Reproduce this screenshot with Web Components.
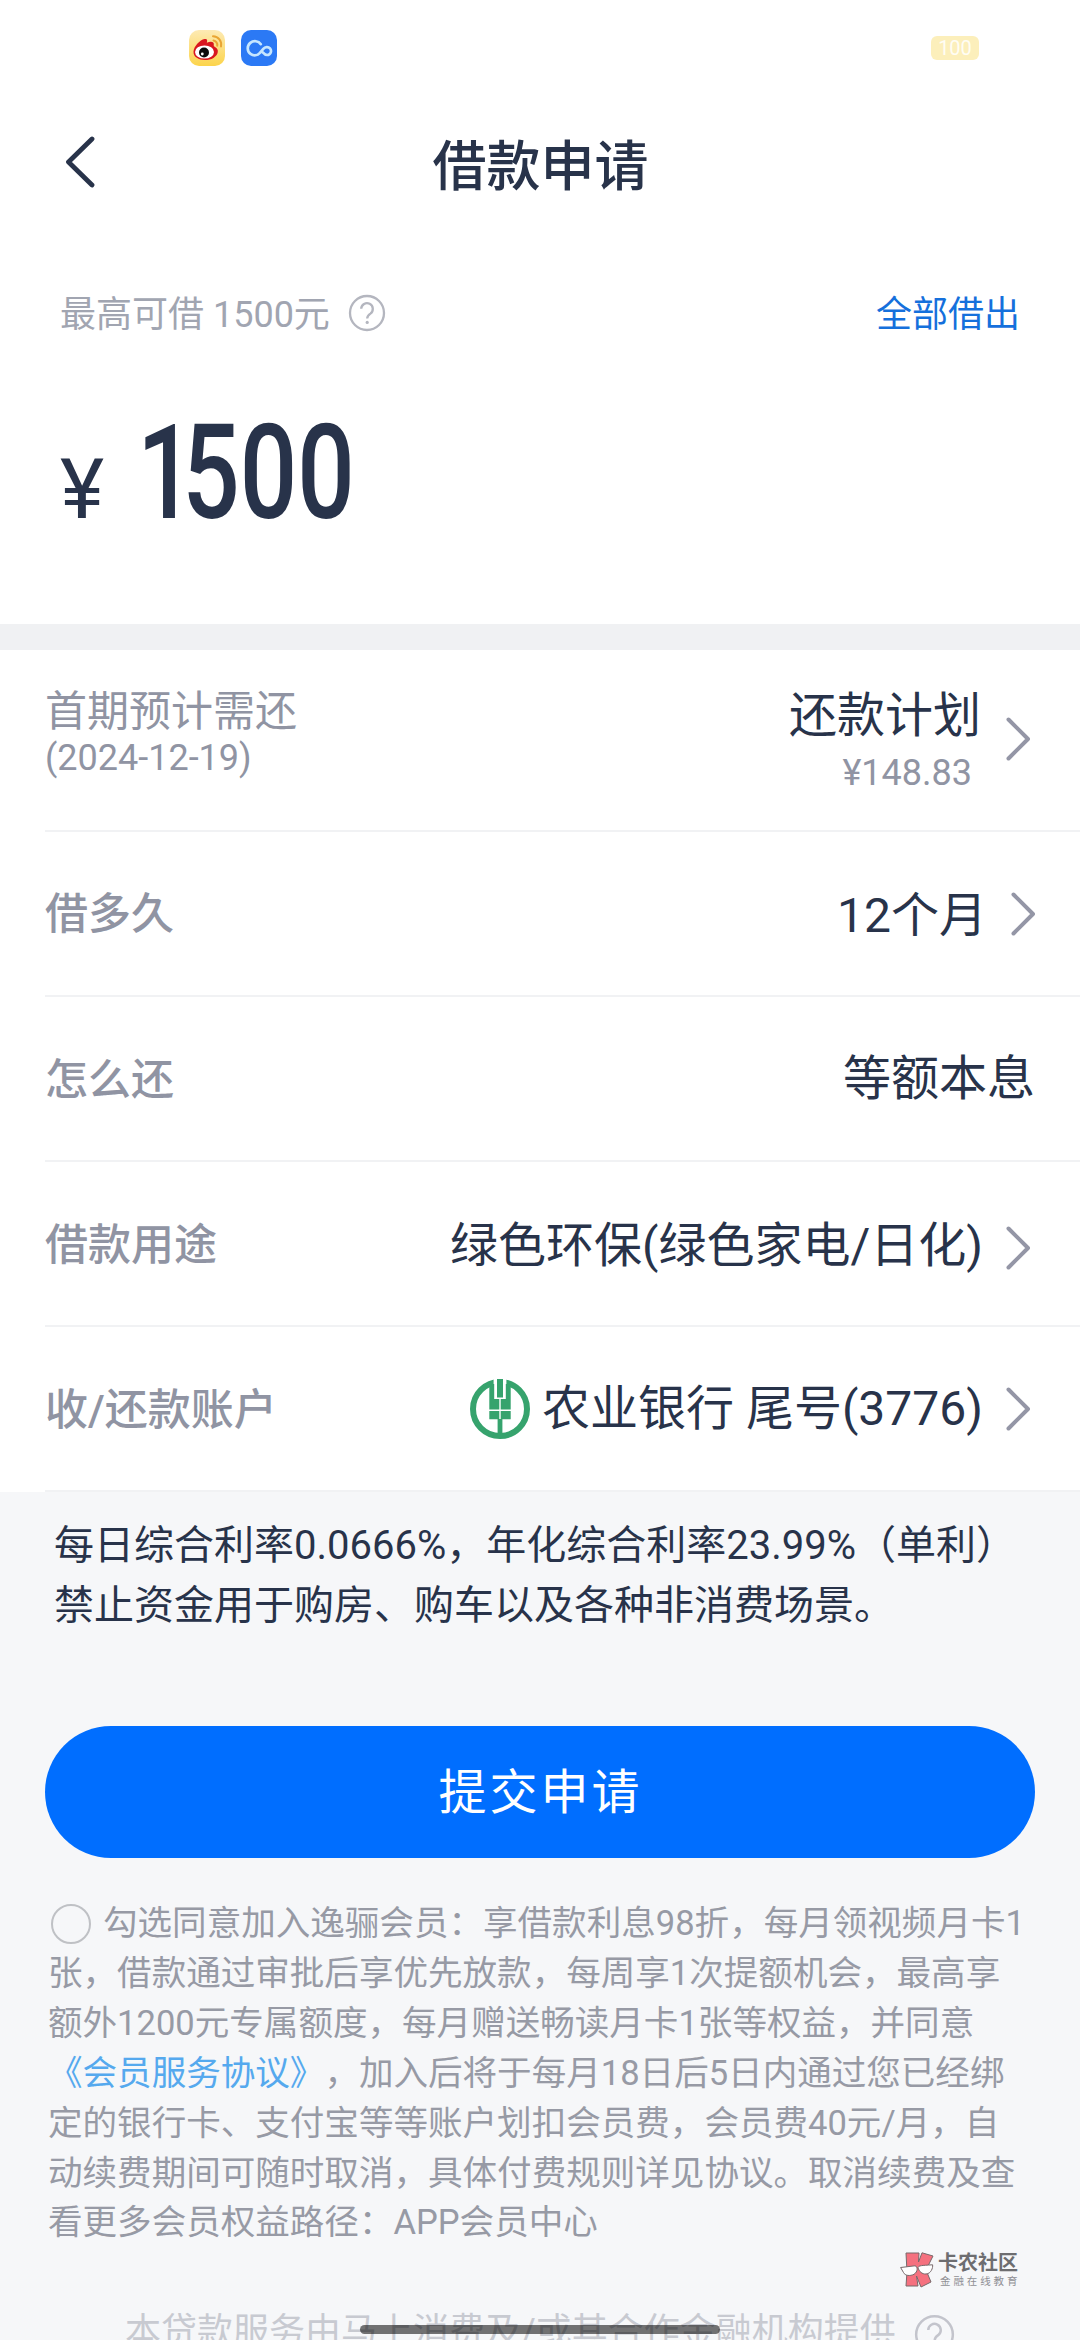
<!DOCTYPE html>
<html lang="zh-CN">
<head>
<meta charset="utf-8">
<title>借款申请</title>
<style>
  html, body { margin: 0; padding: 0; width: 1080px; height: 2340px; overflow: hidden; background: #fff; }
  body { font-family: Roboto, "Noto Sans CJK SC", sans-serif; color: #28334a; text-spacing-trim: space-all; }
</style>
</head>
<body>
<loan-app></loan-app>
<script>
const define = (name, html) => customElements.define(name, class extends HTMLElement {
  constructor() {
    super();
    const t = document.createElement('template');
    t.innerHTML = html;
    this.attachShadow({ mode: 'open' }).appendChild(t.content.cloneNode(true));
  }
});

define('chevron-icon', `
<style>:host{display:block;width:25px;height:44px;flex:none}svg{display:block}</style>
<svg width="25" height="44" viewBox="0 0 25 44" fill="none" stroke="#9496a6" stroke-width="4" stroke-linecap="round" stroke-linejoin="round"><path d="M2.500 2.500 22 22 2.500 41.500"/></svg>`);

define('help-icon', `
<style>:host{display:block;flex:none;width:38px;height:38px;color:#b4b6bf}svg{display:block;width:100%;height:100%}</style>
<svg viewBox="0 0 38 38" fill="none" stroke="currentColor" stroke-width="2.300"><circle cx="19" cy="19" r="17"/><path d="M13.200 14.800a5.800 5.800 0 1 1 9.200 4.800c-2.200 1.500-3.200 2.400-3.200 4.900"/><circle cx="19.200" cy="28.400" r="1.600" fill="currentColor" stroke="none"/></svg>`);

define('bank-logo', `
<style>:host{display:block;width:60px;height:60px;flex:none}svg{display:block}</style>
<svg width="60" height="60" viewBox="0 0 60 60"><circle cx="30" cy="30" r="27" fill="none" stroke="#36a36d" stroke-width="6"/>
<path fill="#fff" d="M23.600 0h12.800v12H23.600z"/>
<g fill="#36a36d"><path d="M27 0h6v18.500h-6zM19.300 5h4.900v15h5.100v10.400h-10zM40.700 5h-4.900v15h-5.100v10.400h10zM19.300 32h10v8.300h-10zM30.700 32h10v8.300h-10zM27.600 40h4.800v16h-4.800z"/></g></svg>`);

define('status-bar', `
<style>
:host{display:flex;height:96px;box-sizing:border-box;padding:0 101px 0 189px;align-items:center}
svg{display:block;margin-right:16px}
.battery{margin-left:auto;width:48px;height:24px;border-radius:6px;background:#fcefbb;color:#fffdf4;font-size:20px;font-weight:400;line-height:24px;text-align:center}
</style>
<svg width="36" height="36" viewBox="0 0 36 36"><defs><linearGradient id="g" x2="0" y2="1"><stop stop-color="#fdeab4"/><stop offset="1" stop-color="#fcd44b"/></linearGradient></defs>
<rect width="36" height="36" rx="10" fill="url(#g)"/>
<path d="M4.500 21.500C5 16 11 10 15.500 9c3-.5 3 2 2.300 3.800 3-1.300 7.700-2 7 2.300-.2 1 .2 1.500 1.200 2 4.500 2 3.500 8-1.500 10.800C17 32 4 30 4.500 21.500z" fill="#d9161f"/>
<ellipse cx="15.500" cy="22" rx="9.500" ry="6.600" fill="#fff"/><circle cx="15" cy="22.500" r="5" fill="#0b0b0b"/><circle cx="13.300" cy="24" r="1.400" fill="#fff"/>
<path d="M24 6.200a8.500 8.500 0 0 1 8 10.300M24.500 10.500a4.500 4.500 0 0 1 3.700 5.300" fill="none" stroke="#e9a534" stroke-width="2" stroke-linecap="round"/></svg>
<svg width="36" height="36" viewBox="0 0 36 36"><rect width="36" height="36" rx="10" fill="#2b79f5"/>
<path d="M19.800 14.200C17.500 10.700 12.500 10.300 9.300 12.900c-3.500 2.900-3.400 8.400.2 11 3.200 2.300 7 1.600 9.400-1.100l3.400-4c1.800-2.100 5-2.400 6.700-.4 2.200 2.700.5 6.600-2.900 6.600-2 0-3.200-1.300-4.600-2.900" fill="none" stroke="#c5e6ff" stroke-width="2.700" stroke-linecap="round"/></svg>
<span class="battery">100</span>`);

define('nav-bar', `
<style>
:host{display:grid;grid-template-columns:1fr auto 1fr;align-items:center;height:138px}
svg{display:block;margin:0 0 6px 65px}
h1{margin:0;font-size:54px;line-height:132px;padding:6px 0 0 1px;font-weight:500;color:#28334a}
</style>
<svg width="31" height="52" viewBox="0 0 31 52" fill="none" stroke="#28334a" stroke-width="4.800" stroke-linecap="round" stroke-linejoin="round"><path d="M27 3 3.500 26 27 49"/></svg>
<h1><slot></slot></h1>`);

define('amount-panel', `
<style>
:host{display:block;height:390px;box-sizing:border-box;padding:55px 60px 0}
.head{display:flex;align-items:center;height:48px;font-size:36px;line-height:48px;color:#a1a5b1}
.head span{padding-top:3px}
help-icon{margin-left:18px}
.all{margin-left:auto;color:#1570dc}
.sum{display:flex;align-items:baseline;margin-top:61px;line-height:150px;color:#28334a}
.yen{font-size:84px;width:77px}
.num{font-size:132px;font-weight:500;display:block;transform:scaleX(.767);transform-origin:0 0}
.num::first-letter{letter-spacing:-16px}
</style>
<div class="head"><span>最高可借 1500元</span><help-icon></help-icon><span class="all">全部借出</span></div>
<div class="sum"><span class="yen">¥</span><span class="num">1500</span></div>`);

define('form-row', `
<style>
:host{display:flex;align-items:center;box-sizing:border-box;height:165px;margin-left:45px;padding-right:49px;border-bottom:2px solid #f1f2f4;background:#fff}
.label{font-size:43px;font-weight:500;color:#9094a3;line-height:60px;padding:var(--label-drop,3px) 0 0}
.value{margin-left:auto;display:flex;align-items:center;font-size:48px;line-height:64px;color:#28334a;white-space:nowrap;padding-top:var(--drop,4px)}
slot[name=end]{display:block}
</style>
<div class="label"><slot name="label"></slot></div>
<div class="value"><slot></slot></div>
<slot name="end"></slot>`);

define('plan-label', `
<style>:host{display:block;font-weight:400;margin-top:-20px}.a{font-size:42px;line-height:52px}.b{font-size:36px;line-height:40px}</style>
<div class="a">首期预计需还</div><div class="b">(2024-12-19)</div>`);

define('plan-value', `
<style>:host{display:flex;flex-direction:column;align-items:flex-end}.a{font-size:48px;line-height:62px}.b{font-size:36px;line-height:52px;color:#9094a3;margin-right:9px}</style>
<div class="a">还款计划</div><div class="b">¥148.83</div>`);

define('rate-note', `
<style>:host{display:block;height:234px;box-sizing:border-box;padding:24px 0 0 54px;font-size:40px;line-height:60px;color:#28334a;white-space:nowrap}</style>
<div>每日综合利率0.0666%，年化综合利率23.99%（单利）</div><div>禁止资金用于购房、购车以及各种非消费场景。</div>`);

define('submit-button', `
<style>:host{display:block;margin:0 45px}
button{display:block;width:100%;height:132px;border:0;padding:2px 0 0 1px;border-radius:66px;background:#006eff;color:#fff;font-family:inherit;font-size:48px;letter-spacing:3px;line-height:130px}</style>
<button><slot></slot></button>`);

define('member-terms', `
<style>:host{display:block;margin:41px 0 0 48px;font-size:34.560px;line-height:49.900px;color:#979aa5;white-space:nowrap}
.first{display:flex;align-items:center}
i{box-sizing:border-box;width:40px;height:40px;border:2.500px solid #bfc1c5;border-radius:50%;margin:0 12px 0 3px}
a{color:#55a9ee}</style>
<div class="first"><i></i><span>勾选同意加入逸骊会员：享借款利息98折，每月领视频月卡1</span></div>
<div>张，借款通过审批后享优先放款，每周享1次提额机会，最高享</div>
<div>额外1200元专属额度，每月赠送畅读月卡1张等权益，并同意</div>
<div><a>《会员服务协议》</a>，加入后将于每月18日后5日内通过您已经绑</div>
<div>定的银行卡、支付宝等等账户划扣会员费，会员费40元/月，自</div>
<div>动续费期间可随时取消，具体付费规则详见协议。取消续费及查</div>
<div>看更多会员权益路径：APP会员中心</div>`);

define('brand-mark', `
<style>:host{display:flex;align-items:center;gap:4px;width:120px;height:36px;white-space:nowrap}
svg{display:block;flex:none}
.a{font-size:20px;line-height:20px;font-weight:700;color:#6d6d70}
.b{font-size:10.500px;line-height:13px;letter-spacing:2.900px;color:#909095;margin:2px 0 0 2px}</style>
<svg width="34" height="36" viewBox="0 0 34 36" stroke="#77696b" stroke-width="1"><path fill="#f5717f" d="M6 1h13l-.5 9L22 .8 33 4l-7 14 5 12-10 5-4.500-11L18 34H6l1-14z"/><path fill="#fff" d="M.6 15.500 15 13.800c3 .5 3 6-1 8.500-4 2-9 1.500-10.500-1.800zM18 15.500c1-2 3-2 14.600-2.700.5 3-1.600 9-6.600 9.200-4 .2-7-2.500-8-6.500z"/></svg>
<div><div class="a">卡农社区</div><div class="b">金融在线教育</div></div>`);

define('footer-note', `
<style>:host{display:flex;align-items:center;height:50px;padding-left:125px;font-size:36px;line-height:50px;color:#c8cad1;white-space:nowrap}
help-icon{width:41px;height:41px;margin:4px 0 0 18px;color:#c3c4cc}</style>
<span>本贷款服务由马上消费及/或其合作金融机构提供</span><help-icon></help-icon>`);

define('home-indicator', `
<style>:host{display:block;width:360px;height:9px;border-radius:5px;background:rgba(0,0,0,.54)}</style>`);

define('loan-app', `
<style>
:host{display:flex;flex-direction:column;position:relative;width:1080px;height:2340px;overflow:hidden;background:#f6f7f9}
header,.form,.band,rate-note,submit-button,member-terms,.brandrow,footer-note{flex:none}
header,.form{background:#fff}
.band{height:26px;background:#f0f1f3}
.plan{height:182px}
.plan chevron-icon{margin:0 0 2px 25px}
.months{padding-right:44px;--label-drop:0px}
.months chevron-icon{margin-left:24px}
.method{padding-right:45px;--drop:1px}
.use chevron-icon,.acct chevron-icon{margin-left:23px}
.use chevron-icon{margin-top:9px}
.acct{--drop:1px}
bank-logo{margin-right:12px}
.brandrow{display:flex;justify-content:flex-end;padding-right:60px;margin-top:4px}
footer-note{margin-top:19px}
home-indicator{position:absolute;left:360px;top:2325px}
</style>
<header><status-bar></status-bar><nav-bar>借款申请</nav-bar><amount-panel></amount-panel></header>
<div class="band"></div>
<div class="form">
<form-row class="plan"><plan-label slot="label"></plan-label><plan-value></plan-value><chevron-icon slot="end"></chevron-icon></form-row>
<form-row class="months"><span slot="label">借多久</span>12个月<chevron-icon slot="end"></chevron-icon></form-row>
<form-row class="method"><span slot="label">怎么还</span>等额本息</form-row>
<form-row class="use"><span slot="label">借款用途</span>绿色环保(绿色家电/日化)<chevron-icon slot="end"></chevron-icon></form-row>
<form-row class="acct"><span slot="label">收/还款账户</span><bank-logo></bank-logo>农业银行 尾号(3776)<chevron-icon slot="end"></chevron-icon></form-row>
</div>
<rate-note></rate-note>
<submit-button>提交申请</submit-button>
<member-terms></member-terms>
<div class="brandrow"><brand-mark></brand-mark></div>
<footer-note></footer-note>
<home-indicator></home-indicator>`);
</script>
</body>
</html>
